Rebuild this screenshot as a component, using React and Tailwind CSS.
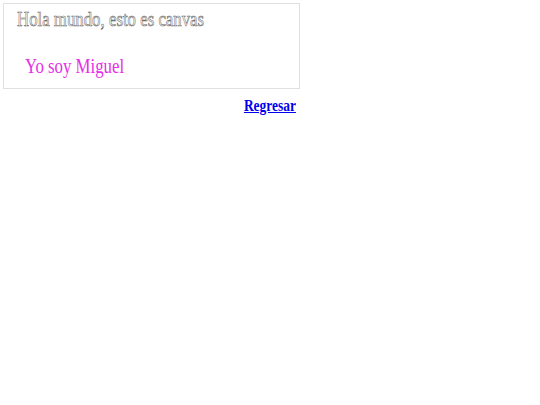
export default function App() {
  return (
    <div className="p-[3px] bg-white min-h-screen" style={{ fontFamily: '"Liberation Serif", serif' }}>
      <div className="w-[297px]">
        <div className="h-[86px] border border-[#e0e0e0] pt-[3px] pl-[13px]">
          <div
            className="text-[20px] leading-[24px] text-transparent origin-left scale-x-[0.84] whitespace-nowrap"
            style={{ WebkitTextStroke: '0.6px #6b6b6b' }}
          >
            Hola mundo, esto es canvas
          </div>
          <div className="pl-[8px] pt-[23px]">
            <div className="text-[20px] leading-[24px] text-[#e52ee5] origin-left scale-x-[0.84] whitespace-nowrap">Yo soy Miguel</div>
          </div>
        </div>
        <div className="flex justify-end pr-[4px] pt-[7px]">
          <a href="#" className="font-bold text-[16px] leading-[20px] text-[#0000ee] underline origin-right scale-x-[0.84] inline-block">Regresar</a>
        </div>
      </div>
    </div>
  );
}
